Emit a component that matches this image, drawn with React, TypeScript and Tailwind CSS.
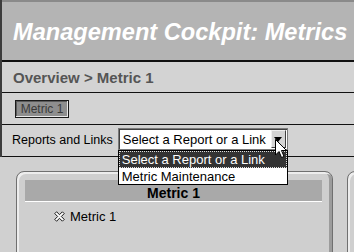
import React from "react";

export default function App() {
  return (
    <div className="relative w-[354px] h-[252px] overflow-hidden bg-[#d0d0d0] font-['Liberation_Sans',Arial,sans-serif]">
      <div className="border-l-2 border-[#3c3c3c]">
        <div className="h-[60px] bg-[#b4b4b4] border-t-2 border-[#8a8a8a] flex items-center pl-[11px] pt-[3px]">
          <span className="text-white italic font-bold text-[23.6px] leading-none whitespace-nowrap">
            Management Cockpit: Metrics
          </span>
        </div>
        <div className="h-[2px] bg-[#111]" />
        <div className="h-[30px] bg-[#d3d3d3] flex items-center pl-[11px]">
          <span className="text-[#555] font-bold text-[15px] leading-none whitespace-nowrap">
            Overview &gt; Metric 1
          </span>
        </div>
        <div className="h-px bg-[#111]" />
        <div className="h-[31px] bg-[#d3d3d3] flex items-center pl-[13px]">
          <div className="w-[54px] h-[18px] border border-[#1a1a1a] shadow-[inset_-1px_-1px_0_#e8e8e8,inset_1px_1px_0_#5a5a5a] bg-[#8e8e8e] flex items-center justify-center">
            <span className="text-[#3a3a3a] text-[12px] leading-none">Metric 1</span>
          </div>
        </div>
        <div className="h-px bg-[#111]" />
        <div className="h-[31px] bg-[#d3d3d3] flex items-center pl-[10px]">
          <span className="text-black text-[12.5px] leading-none whitespace-nowrap">Reports and Links</span>
          <div className="relative ml-[5px] mt-[-3px] w-[170px] h-[22px] bg-white border border-[#7a7a7a] shadow-[inset_1px_1px_0_#404040] flex items-center">
            <span className="pl-[4px] text-black text-[13px] leading-none whitespace-nowrap">Select a Report or a Link</span>
            <div className="absolute right-[1px] top-[1px] w-[15px] h-[18px] bg-[#d4d4d4] border border-t-[#f0f0f0] border-l-[#f0f0f0] border-r-[#404040] border-b-[#404040] flex items-center justify-center">
              <svg width="8" height="5" viewBox="0 0 8 5"><path d="M0 0H8L4 5Z" fill="#000" /></svg>
            </div>
            <div className="absolute left-[-1px] top-[21px] w-[170px] h-[35px] bg-white border border-black z-10 flex flex-col">
              <div className="h-[17px] bg-[#333] border border-dotted border-[#ddd] flex items-center pl-[2px]">
                <span className="text-white text-[13px] leading-none whitespace-nowrap">Select a Report or a Link</span>
              </div>
              <div className="h-[16px] flex items-center pl-[3px]">
                <span className="text-black text-[13px] leading-none whitespace-nowrap">Metric Maintenance</span>
              </div>
            </div>
          </div>
        </div>
        <div className="h-px bg-[#111]" />
      </div>
      <div className="flex gap-[14px] pl-[16px] pt-[14px]">
        <div className="w-[317px] h-[110px] shrink-0 rounded-t-[8px] border border-[#707070] bg-[#cfcfcf] shadow-[inset_2px_2px_0_#ededed,inset_-3px_0_0_#9c9c9c] pt-[8px] pl-[8px] pr-[10px]">
          <div className="h-[22px] bg-[#a9a9a9] border-b border-white flex items-center justify-center pt-[4px]">
            <span className="text-black font-bold text-[14px] leading-none">Metric 1</span>
          </div>
          <div className="flex items-center pl-[29px] pt-[8px] gap-[5px]">
            <svg width="11" height="11" viewBox="0 0 11 11">
              <path d="M0.8 2.6 L2.6 0.8 L5.5 3.7 L8.4 0.8 L10.2 2.6 L7.3 5.5 L10.2 8.4 L8.4 10.2 L5.5 7.3 L2.6 10.2 L0.8 8.4 L3.7 5.5 Z" fill="#fff" stroke="#000" strokeWidth="0.9" />
            </svg>
            <span className="text-black text-[13px] leading-none">Metric 1</span>
          </div>
        </div>
        <div className="w-[120px] h-[110px] shrink-0 rounded-t-[8px] border border-[#707070] bg-[#cfcfcf] shadow-[inset_2px_2px_0_#ededed]" />
      </div>
      <svg className="absolute left-[275px] top-[139px] z-20" width="13" height="20" viewBox="0 0 13 20">
        <path d="M0.5 0.5 L0.5 16 L4 12.5 L6.5 18.5 L9 17.5 L6.5 11.5 L11.5 11.5 Z" fill="#fff" stroke="#000" strokeWidth="1" />
      </svg>
    </div>
  );
}
